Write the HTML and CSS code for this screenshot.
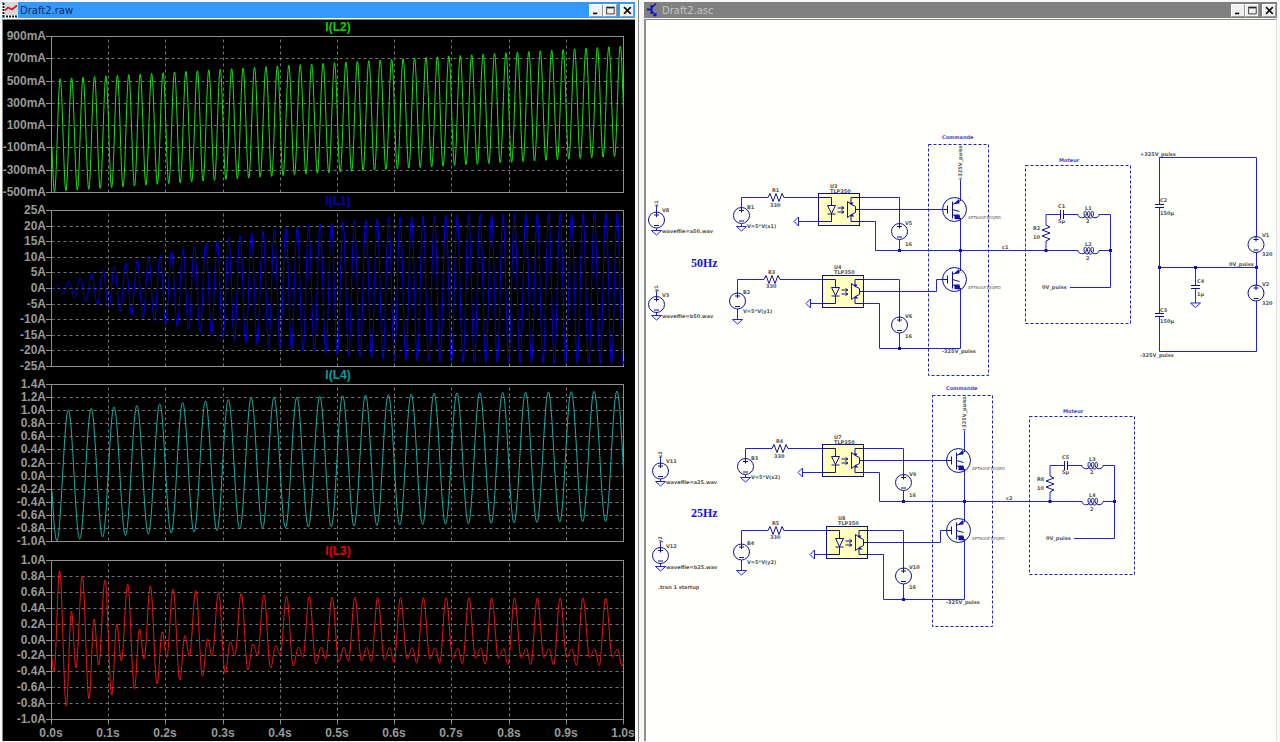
FILE: index.html
```html
<!DOCTYPE html>
<html lang="en">
<head>
<meta charset="utf-8">
<title>Draft2</title>
<link rel="stylesheet" href="styles.css">
</head>
<body>
<main class="desk">
  <section class="window window-plot" aria-label="Draft2.raw">
    <header class="titlebar active">
      <svg class="icon" viewBox="0 0 16 16" aria-hidden="true">
        <rect x="2" y="0" width="14" height="14" fill="#d4d8da"/>
        <path d="M1.500 1V15M3 14.500H16" stroke="#fff" stroke-width="3"/>
        <path d="M1.500 1V15M4 14.500H16" stroke="#111" stroke-width="2" stroke-dasharray="2 1"/>
        <path d="M3 8.500L6 5.500L10 7.500L15 3.500" fill="none" stroke="#d8141c" stroke-width="1.700"/>
      </svg>
      <h1 class="caption">Draft2.raw</h1>
      <button class="ctl" aria-label="Minimize"><svg viewBox="0 0 13 13"><path d="M3 10H8" stroke="#111" stroke-width="2"/></svg></button>
      <button class="ctl" aria-label="Maximize"><svg viewBox="0 0 13 13"><path d="M2.500 4V10.500H11.500V4" fill="none" stroke="#222" stroke-width="1"/><path d="M2 3H12" stroke="#222" stroke-width="2"/></svg></button>
      <button class="ctl close" aria-label="Close"><svg viewBox="0 0 13 13"><path d="M3 2.500L11 10.500M11 2.500L3 10.500" stroke="#111" stroke-width="2"/></svg></button>
    </header>
    <div class="pane pane-dark">
      <svg id="plots" class="canvas" viewBox="3 20 632 721" preserveAspectRatio="xMinYMin meet" role="img" aria-label="Coil currents over time"></svg>
    </div>
  </section>

  <section class="window window-schematic" aria-label="Draft2.asc">
    <header class="titlebar">
      <svg class="icon" viewBox="0 0 16 16" aria-hidden="true">
        <path d="M3 7.500H7" stroke="#1010d0" stroke-width="2"/>
        <path d="M7.500 3V12" stroke="#1010d0" stroke-width="2"/>
        <path d="M8 5.500L12 1.500M8 9.500L12 13.500" stroke="#1010d0" stroke-width="1.500"/>
        <path d="M12.500 14.500V10.500L8.500 14Z" fill="#1010d0"/>
      </svg>
      <h2 class="caption">Draft2.asc</h2>
      <button class="ctl" aria-label="Minimize"><svg viewBox="0 0 13 13"><path d="M3 10H8" stroke="#111" stroke-width="2"/></svg></button>
      <button class="ctl" aria-label="Maximize"><svg viewBox="0 0 13 13"><path d="M2.500 4V10.500H11.500V4" fill="none" stroke="#222" stroke-width="1"/><path d="M2 3H12" stroke="#222" stroke-width="2"/></svg></button>
      <button class="ctl close" aria-label="Close"><svg viewBox="0 0 13 13"><path d="M3 2.500L11 10.500M11 2.500L3 10.500" stroke="#111" stroke-width="2"/></svg></button>
    </header>
    <div class="pane pane-light">
      <svg class="canvas" viewBox="646 20 630 721" preserveAspectRatio="xMinYMin meet" role="img" aria-label="Inverter schematic">
        <defs>
          <g id="source" class="part"><circle r="8"/><path d="M0 -8V-3M-2.500 -5H2.500M-2.500 5.500H2.500"/></g>
          <path id="ground" class="wire" d="M-5 0H5L0 4.500Z"/>
          <path id="ground-left" class="wire" d="M0 -4.500V4.500L-4.500 0Z"/>
          <path id="resistor" class="part" d="M0 0L2 -4L5 4L8 -4L11 4L14 -4L16 0"/>
          <path id="coil" class="part" d="M0 0C0 4 8 5 8.500 -1C8.500 -4 6 -4 6 -1C6 5 12 5 12 -1C12 -4 9.500 -4 9.500 -1C9.500 5 15.500 5 15.500 -1C15.500 -4 13 -4 13 -1C13 5 21 4 21 0"/>
          <path id="cap" class="part" d="M-4.500 -1.500H4.500M-4.500 1.500H4.500"/>
          <rect id="node" class="node" x="-1.500" y="-1.500" width="3" height="3"/>
          <g id="opto">
            <rect class="chip" width="41" height="32"/>
            <path class="part" d="M0 4H13V12M9 12H17L13 20ZM9 20.500H17M13 20V28H0"/>
            <path class="part" d="M19 14.500H25M19 18.500H25M23 13L25.500 14.500L23 16M23 17L25.500 18.500L23 20"/>
            <path class="part" d="M29 8V24L33 21L37 19V13L33 11ZM41 4H32.500V10M37 16H41M32.500 22V28H41"/>
            <path class="solid" d="M31 9L35 9L33 12ZM33 20L36 23L32 23Z"/>
          </g>
          <g id="igbt">
            <circle class="part" r="12"/>
            <path class="part" d="M-12 0H-7M-7 -4V4M-2 -8V9M-2 -5L6 -9M-2 0L5 2M-2 5L6 9"/>
            <path class="solid" d="M-1 -5.500L4.500 -10.500L5 -6ZM0 5L5 5L6 10L0 9.500Z"/>
          </g>
          <g id="inverter">
            <path class="wire" d="M656.500 206V212M656.500 228V230.500M656.500 291V297M656.500 312V316"/>
            <use href="#source" x="656.500" y="220"/><use href="#ground" x="656.500" y="230.500"/>
            <use href="#source" x="656.500" y="304.500"/><use href="#ground" x="656.500" y="315.500"/>
            <path class="wire" d="M741.500 207.500V197.500H768M784 197.500H818.500M741.500 224V226M737.500 293V279.500H764M780 279.500H822.500M737.500 309V319.500"/>
            <use href="#source" x="741.500" y="215.500"/><use href="#ground" x="741.500" y="226.500"/>
            <use href="#source" x="737.500" y="301"/><use href="#ground" x="737.500" y="319.500"/>
            <use href="#resistor" x="768" y="197.500"/><use href="#resistor" x="764" y="279.500"/>
            <use href="#opto" x="818.500" y="193.500"/><use href="#opto" x="822.500" y="275.500"/>
            <path class="wire" d="M818.500 221.500H798.500M822.500 303.500H810.500"/>
            <use href="#ground-left" x="798.500" y="221.500"/><use href="#ground-left" x="810.500" y="303.500"/>
            <path class="wire" d="M859.500 197.500H899.500V223.500M859.500 209.500H943M859.500 221.500H875.500V250.500H1078M899.500 239.500V250.500"/>
            <path class="wire" d="M863.500 279.500H899.500V317M863.500 291.500H936.500V279.500H943M863.500 303.500H879.500V348.500H960.500M899.500 333V348.500"/>
            <use href="#source" x="899.500" y="231.500"/><use href="#source" x="899.500" y="325"/>
            <path class="wire" d="M960.500 180V201M960.500 218V271M960.500 288V348.500"/>
            <use href="#igbt" x="954.500" y="209.500"/><use href="#igbt" x="954.500" y="279.500"/>
            <use href="#node" x="899.500" y="250.500"/><use href="#node" x="899.500" y="348.500"/><use href="#node" x="960.500" y="250.500"/>
            <rect class="frame" x="928.500" y="144.500" width="60" height="231"/>
            <rect class="frame" x="1025.500" y="165.500" width="105" height="158"/>
            <path class="wire" d="M1046 250.500V241M1046 225V214.500H1060M1064 214.500H1078M1099 214.500H1110.500V287.500H1070M1099 250.500H1110.500"/>
            <use href="#resistor" transform="translate(1046 225) rotate(90)"/>
            <use href="#cap" transform="translate(1062 214.500) rotate(90)"/>
            <use href="#coil" x="1078" y="214.500"/><use href="#coil" x="1078" y="250.500"/>
            <use href="#node" x="1046" y="250.500"/><use href="#node" x="1110.500" y="250.500"/>
            <g class="model">
              <text x="968" y="219">APT60GF120JRD</text><text x="968" y="289">APT60GF120JRD</text>
              <text x="968" y="199">-</text><text x="968" y="268">-</text>
            </g>
            <g class="lbl">
              <text x="770" y="207">330</text><text x="766" y="288">330</text>
              <text x="830" y="193">TLP350</text><text x="834" y="274">TLP350</text>
              <text x="905" y="246">16</text><text x="905" y="338">16</text>
              <text transform="translate(962 181) rotate(-90)">+325V_puiss</text>
              <text x="942" y="353">-325V_puiss</text>
              <text x="1058" y="223">5µ</text><text x="1086" y="223">2</text><text x="1086" y="260">2</text>
              <text x="1033" y="239">10</text><text x="1042" y="289">0V_puiss</text>
              <text class="note" x="942" y="139">Commande</text><text class="note" x="1059" y="162">Moteur</text>
            </g>
          </g>
        </defs>

        <use href="#inverter"/>
        <g class="lbl">
          <text transform="translate(658 207) rotate(-90)">x1</text><text transform="translate(658 292) rotate(-90)">y1</text>
          <text x="662" y="212">V8</text><text x="662" y="233">wavefile=a50.wav</text>
          <text x="662" y="297">V3</text><text x="662" y="318">wavefile=b50.wav</text>
          <text x="747" y="209">B1</text><text x="747" y="228">V=5*V(x1)</text>
          <text x="743" y="294">B2</text><text x="743" y="313">V=5*V(y1)</text>
          <text x="772" y="192">R1</text><text x="768" y="274">R3</text>
          <text x="830" y="188">U3</text><text x="834" y="269">U4</text>
          <text x="905" y="225">V5</text><text x="905" y="318">V6</text>
          <text x="1002" y="249">c1</text><text x="1033" y="230">R2</text>
          <text x="1058" y="208">C1</text><text x="1085" y="210">L1</text><text x="1085" y="246">L2</text>
        </g>

        <use href="#inverter" transform="translate(4 251)"/>
        <g class="lbl" transform="translate(4 251)">
          <text transform="translate(658 207) rotate(-90)">x2</text><text transform="translate(658 292) rotate(-90)">y2</text>
          <text x="662" y="212">V11</text><text x="662" y="233">wavefile=a25.wav</text>
          <text x="662" y="297">V12</text><text x="662" y="318">wavefile=b25.wav</text>
          <text x="747" y="209">B3</text><text x="747" y="228">V=5*V(x2)</text>
          <text x="743" y="294">B4</text><text x="743" y="313">V=5*V(y2)</text>
          <text x="772" y="192">R4</text><text x="768" y="274">R5</text>
          <text x="830" y="188">U7</text><text x="834" y="269">U8</text>
          <text x="905" y="225">V9</text><text x="905" y="318">V10</text>
          <text x="1002" y="249">c2</text><text x="1033" y="230">R6</text>
          <text x="1058" y="208">C5</text><text x="1085" y="210">L3</text><text x="1085" y="246">L4</text>
        </g>

        <path class="wire" d="M1256.500 236.500V157.500H1159.500V204.500M1159.500 207.500V313.500M1159.500 316.500V351.500H1256.500V301M1256.500 252V285M1159.500 267.500H1256.500M1195.500 267.500V285.500M1195.500 288.500V303"/>
        <use href="#cap" x="1159.500" y="206"/><use href="#cap" x="1159.500" y="315"/><use href="#cap" x="1195.500" y="287"/>
        <use href="#ground" x="1195.500" y="303"/>
        <use href="#source" x="1256" y="244.500"/><use href="#source" x="1256" y="293"/>
        <use href="#node" x="1159.500" y="267.500"/><use href="#node" x="1195.500" y="267.500"/><use href="#node" x="1256.500" y="267.500"/>
        <g class="lbl">
          <text x="1140" y="156">+325V_puiss</text><text x="1140" y="357">-325V_puiss</text><text x="1229" y="266">0V_puiss</text>
          <text x="1160" y="202">C2</text><text x="1160" y="215">150µ</text>
          <text x="1160" y="312">C3</text><text x="1160" y="323">150µ</text>
          <text x="1197" y="283">C4</text><text x="1197" y="296">1µ</text>
          <text x="1262" y="237">V1</text><text x="1262" y="256">320</text>
          <text x="1262" y="286">V2</text><text x="1262" y="305">320</text>
          <text x="658" y="589">.tran 1 startup</text>
        </g>
        <text class="freq" x="691" y="267">50Hz</text>
        <text class="freq" x="691" y="517">25Hz</text>
      </svg>
    </div>
  </section>
</main>
<script src="plots.js"></script>
</body>
</html>
```
FILE: styles.css
```css
* { box-sizing: border-box; }
body {
  margin: 0;
  background: #f8f8f8;
  font-family: "DejaVu Sans", sans-serif;
}
.desk {
  display: grid;
  grid-template-columns: minmax(0, 639fr) minmax(0, 641fr);
  min-height: 100vh;
}
.window {
  display: flex;
  flex-direction: column;
  gap: 1px;
}
.window-plot {
  padding: 2px 3px 1px 2px;
  border-right: 1px solid #858585;
}
.window-schematic { padding: 2px 3px 1px 5px; }
.titlebar {
  display: flex;
  align-items: center;
  height: 16px;
  padding-right: 1px;
  background: #808080;
  color: #c4c4c4;
}
.titlebar.active {
  background: #3399ff;
  color: #102c50;
}
.icon { width: 16px; height: 16px; }
.caption {
  flex: 1;
  margin: 0 0 0 2px;
  padding-top: 2px;
  font-size: 10px;
  line-height: 14px;
  font-weight: normal;
}
.ctl {
  width: 14px;
  height: 13px;
  padding: 0;
  border: 1px solid;
  border-color: #fff #999 #999 #fff;
  background: #f0f0f0;
}
.ctl svg { display: block; width: 12px; height: 11px; }
.close { margin-left: 3px; }
.pane {
  flex: 1;
  display: flex;
  border-top: 1px solid #888;
}
.pane-dark {
  background: #000;
  border-left: 1px solid #888;
}
.pane-light {
  background: #fffffb;
  border-left: 2px solid #909090;
  border-right: 1px solid #e4e4e4;
}
.canvas { display: block; width: 100%; }

.tick, .trace-name {
  font-family: "Liberation Sans", sans-serif;
  font-size: 12px;
  font-weight: bold;
}
.tick { fill: #999; text-anchor: end; }
.tick-x { text-anchor: middle; }
.trace-name { text-anchor: middle; }
.plot-frame { fill: none; stroke: #909090; }
.grid { stroke: #737373; stroke-dasharray: 3 3; }
.trace { fill: none; stroke-linejoin: round; }

.wire { fill: none; stroke: #2222d8; }
.part { fill: none; stroke: #101090; }
.solid, .node { fill: #1010b0; }
.chip { fill: #ffffc0; stroke: #101080; }
.frame { fill: none; stroke: #2020b8; stroke-dasharray: 3 2; }
.lbl, .model {
  font-family: "DejaVu Sans", sans-serif;
  font-size: 5px;
  font-weight: bold;
  fill: #555;
}
.model { font-size: 4px; font-weight: normal; }
.note { fill: #4646d0; }
.freq {
  font-family: "Liberation Serif", serif;
  font-size: 12px;
  font-weight: bold;
  fill: #1414d8;
}
```
FILE: plots.js
```js
const svg = document.getElementById('plots');
const NS = 'http://www.w3.org/2000/svg';
const X0 = 51.5, X1 = 623.5;

function add(tag, attrs, text) {
  const el = document.createElementNS(NS, tag);
  for (const k in attrs) el.setAttribute(k, attrs[k]);
  if (text !== undefined) el.textContent = text;
  svg.appendChild(el);
}

// Linear interpolation through a sorted list of [x, y] knots.
function lerp(knots, x) {
  if (x <= knots[0][0]) return knots[0][1];
  for (let i = 1; i < knots.length; i++) {
    const [a, ya] = knots[i - 1], [b, yb] = knots[i];
    if (x <= b) return ya + (yb - ya) * (x - a) / (b - a);
  }
  return knots[knots.length - 1][1];
}

// Oscillation between an upper and a lower envelope.
function wave(top, bottom, peak, period) {
  return x => {
    const hi = lerp(top, x), lo = lerp(bottom, x);
    return (hi + lo) / 2 + (hi - lo) / 2 * Math.cos(2 * Math.PI * (x - peak) / period);
  };
}

// Half-cosine segments between successive extrema.
function extrema(points) {
  return x => {
    let i = 1;
    while (i < points.length - 1 && points[i][0] < x) i++;
    const [a, ya] = points[i - 1], [b, yb] = points[i];
    return ya + (yb - ya) * (1 - Math.cos(Math.PI * (x - a) / (b - a))) / 2;
  };
}

function beatPoints() {
  const high = [[0, 571], [1, 576], [2, 580], [3, 584], [4, 586], [5, 589], [7, 592], [10, 596], [13, 597.5], [24, 598]];
  const deep = [[0, 706], [1, 699], [2, 695], [3, 689], [4, 684], [5, 680], [6, 676], [7, 673], [8, 670], [10, 666], [12, 662], [15, 659], [24, 657]];
  const small = [[0, 611], [1, 619], [2, 624], [3, 629], [4, 632], [6, 639], [8, 644], [10, 647], [24, 649]];
  const shallow = [[0, 668], [1, 665], [2, 661], [3, 659], [5, 656], [9, 655], [10, 657], [12, 661], [15, 663], [24, 666]];
  const pts = [[49, 630], [54, 672]];
  for (let k = 0; k < 25; k++) {
    const x = k <= 11 ? 59.6 + 22.7 * k : 309.3 + 22.8 * (k - 11);
    pts.push([x, lerp(high, k)], [x + 6.7, lerp(deep, k)], [x + 11.8, lerp(small, k)], [x + 16.3, lerp(shallow, k)]);
  }
  return pts;
}

const amps = [[52, 0], [57, 1], [91, 4.6], [125, 8], [160, 10.8], [216, 15.2], [251, 17.8], [308, 20.2], [380, 22.5], [450, 23.6], [623, 24.2]];
const range = (from, step, n, format) => Array.from({ length: n }, (_, i) => format(from + step * i));
const amp1 = v => (Math.abs(v) < 0.01 ? 0 : v).toFixed(1) + 'A';

const plots = [
  { name: 'I(L2)', color: '#00d800', line: '#14e614', y0: 36.5, y1: 192.5,
    ticks: range(900, -200, 8, v => v + 'mA'),
    f: wave([[52, 79], [623, 46]], [[52, 192], [134, 186], [307, 174], [623, 156]], 60.2, 11.43) },
  { name: 'I(L1)', color: '#0000c0', line: '#0000e0', y0: 210.5, y1: 366.5,
    ticks: range(25, -5, 11, v => v + 'A'),
    f: wave(amps.map(([x, a]) => [x, 288.5 - 3.13 * a]), amps.map(([x, a]) => [x, 288.5 + 3.13 * a]), 57.2, 11.43) },
  { name: 'I(L4)', color: '#00a0a0', line: '#18b4ac', y0: 384.5, y1: 541.5,
    ticks: range(1.4, -0.2, 13, amp1),
    f: wave([[52, 412], [68, 410], [114, 407], [160, 404], [206, 401], [251, 398], [297, 397], [450, 393], [623, 391]],
            [[57, 541], [103, 537], [149, 534], [195, 532], [240, 529], [309, 527], [450, 524], [623, 521]], 68.3, 22.86) },
  { name: 'I(L3)', color: '#e80000', line: '#f01414', y0: 560.5, y1: 719.5,
    ticks: range(1, -0.2, 11, amp1), f: extrema(beatPoints()) }
];

const crisp = v => Math.floor(v) + 0.5;

for (const p of plots) {
  const last = p.ticks.length - 1;
  p.ticks.forEach((label, i) => {
    const y = crisp(p.y0 + (p.y1 - p.y0) * i / last);
    if (i > 0 && i < last) add('path', { class: 'grid', d: `M${X0} ${y}H${X1}` });
    add('path', { class: 'plot-frame', d: `M46 ${y}H${X0}` });
    add('text', { class: 'tick', x: 46, y: Math.floor(y + 4) }, label);
  });
  for (let i = 1; i < 10; i++) add('path', { class: 'grid', d: `M${crisp(X0 + 57.2 * i)} ${p.y0 + 3}V${p.y1}` });
  add('rect', { class: 'plot-frame', x: X0, y: p.y0, width: X1 - X0, height: p.y1 - p.y0 });
  let d = '';
  for (let x = X0 + 0.5; x <= X1; x += 0.25) d += (d ? 'L' : 'M') + x + ' ' + p.f(x).toFixed(2);
  add('path', { class: 'trace', d, stroke: p.line });
  add('text', { class: 'trace-name', x: 338, y: Math.floor(p.y0 - 5), fill: p.color }, p.name);
}

const base = plots[plots.length - 1].y1;
for (let i = 0; i <= 10; i++) {
  const x = crisp(X0 + 57.2 * i);
  add('path', { class: 'plot-frame', d: `M${x} ${base}V${base + 5}` });
  add('text', { class: 'tick tick-x', x: Math.floor(x), y: 737 }, (i / 10).toFixed(1) + 's');
}
```
